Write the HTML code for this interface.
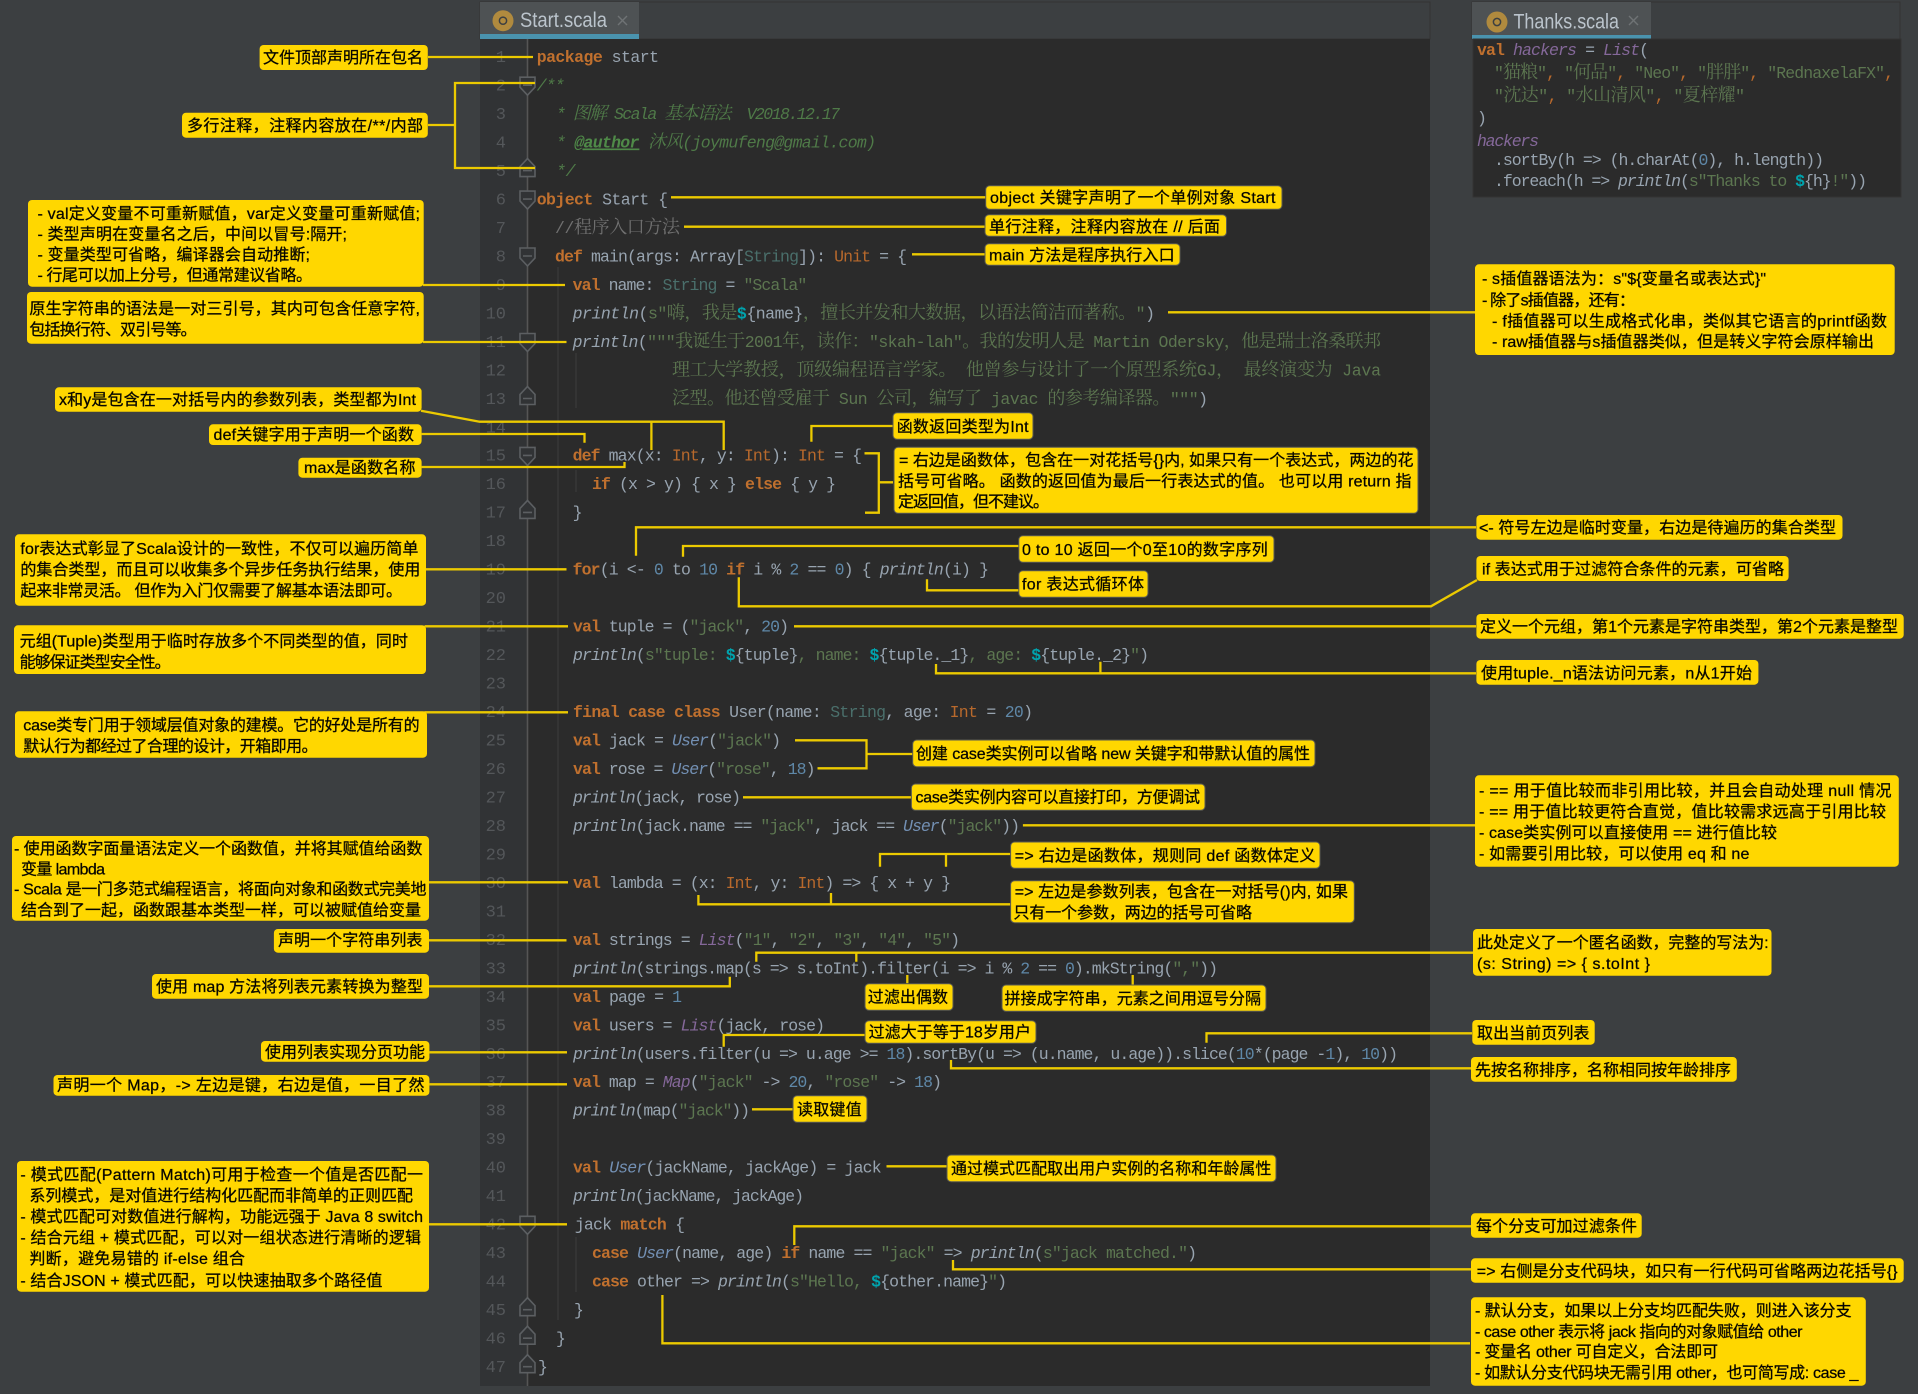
<!DOCTYPE html>
<html lang="zh-CN"><head><meta charset="utf-8"><title>Scala</title>
<style>
html,body{margin:0;padding:0;background:#3c3f41;width:1918px;height:1394px;overflow:hidden}
svg{display:block;position:absolute;left:0;top:0}
text{white-space:pre}
.c{font-family:"Liberation Mono","Noto Serif CJK SC",monospace;font-size:16.5px;fill:#98a4b0}
.z{font-family:"Noto Serif CJK SC","Liberation Mono",serif;font-size:18px}
.k{fill:#c0702e;font-weight:bold}.o{fill:#b8692c}.s{fill:#5c7650}.n{fill:#5f88a8}.m{font-style:italic;fill:#98a4b0}
.u{font-style:italic;fill:#7390b4}.l{font-style:italic;fill:#85689a}.y{fill:#4a6f6b}.d{fill:#00a3ad;font-weight:bold}
.g{fill:#707070}.dc{fill:#4f7a48;font-style:italic}.w{font-style:italic;fill:#4f8a48;font-weight:bold;text-decoration:underline}
.ln{font-family:"Liberation Mono",monospace;font-size:17px;fill:#54575a;text-anchor:end}
.t{font-family:"Liberation Sans","Noto Sans CJK SC",sans-serif;font-size:16px;fill:#000;stroke:#2a2400;stroke-width:.35px}
.b{fill:#ffd700}.bb{fill:#ffd700;stroke:#5a5a50;stroke-width:1}
.tab{font-family:"Liberation Sans",sans-serif;font-size:21px;fill:#bbc4cc}
.x{stroke:#6f7375;stroke-width:1.4;fill:none}
.le{fill:none;stroke:#ecca00;stroke-width:2.3}
.fo{fill:#313335;stroke:#5c5f62;stroke-width:1.6}
</style></head><body>
<svg xmlns="http://www.w3.org/2000/svg" width="1918" height="1394" viewBox="0 0 1918 1394" xml:space="preserve">
<rect width="1918" height="1394" fill="#3c3f41"/>
<!-- main panel -->
<rect x="480" y="2" width="950" height="37" fill="#3c3f41" stroke="#333" stroke-width="1"/>
<rect x="480" y="2" width="159" height="32" fill="#4e5254"/>
<rect x="480" y="34" width="159" height="5" fill="#4a93ae"/>
<rect x="480" y="39" width="47" height="1347" fill="#313335"/>
<rect x="527" y="39" width="903" height="1347" fill="#2b2b2b"/>
<circle cx="503" cy="20.7" r="10.5" fill="#b08a3e"/><circle cx="503" cy="20.7" r="3.6" fill="none" stroke="#3c3f41" stroke-width="1.5"/>
<text class="tab" x="520" y="27" textLength="87" lengthAdjust="spacingAndGlyphs">Start.scala</text>
<path class="x" d="M618 16L627 25M627 16L618 25"/>
<!-- thanks panel -->
<rect x="1472" y="2" width="428" height="37" fill="#3c3f41" stroke="#333" stroke-width="1"/>
<rect x="1472" y="2" width="179" height="33" fill="#4e5254"/>
<rect x="1472" y="35" width="179" height="4" fill="#4a93ae"/>
<rect x="1473" y="39" width="428" height="158" fill="#2b2b2b" stroke="#333" stroke-width="1"/>
<circle cx="1497" cy="22" r="10.5" fill="#b08a3e"/><circle cx="1497" cy="22" r="3.6" fill="none" stroke="#3c3f41" stroke-width="1.5"/>
<text class="tab" x="1513.5" y="28.3" textLength="105.5" lengthAdjust="spacingAndGlyphs">Thanks.scala</text>
<path class="x" d="M1629 16L1638 25M1638 16L1629 25"/>
<!-- guides -->
<path fill="none" stroke="#3d3d3d" stroke-width="1" d="M558 267V1320M576 353V408M576 470V492M576 1237V1292"/>
<path fill="none" stroke="#555" stroke-width="1.6" d="M527.5 39V1386"/>
<!-- fold icons -->
<g>
<path class="fo" transform="translate(527.5,85.2)" d="M-7.5,-8H7.5V2L0,10L-7.5,2Z"/>
<path class="fo" transform="translate(527.5,199.1)" d="M-7.5,-8H7.5V2L0,10L-7.5,2Z"/>
<path class="fo" transform="translate(527.5,256)" d="M-7.5,-8H7.5V2L0,10L-7.5,2Z"/>
<path class="fo" transform="translate(527.5,341.5)" d="M-7.5,-8H7.5V2L0,10L-7.5,2Z"/>
<path class="fo" transform="translate(527.5,455.4)" d="M-7.5,-8H7.5V2L0,10L-7.5,2Z"/>
<path class="fo" transform="translate(527.5,1224.3)" d="M-7.5,-8H7.5V2L0,10L-7.5,2Z"/>
<path class="fo" transform="translate(527.5,170.6)" d="M-7.5,6V-4L0,-12L7.5,-4V6Z"/>
<path class="fo" transform="translate(527.5,398.5)" d="M-7.5,6V-4L0,-12L7.5,-4V6Z"/>
<path class="fo" transform="translate(527.5,512.4)" d="M-7.5,6V-4L0,-12L7.5,-4V6Z"/>
<path class="fo" transform="translate(527.5,1309.7)" d="M-7.5,6V-4L0,-12L7.5,-4V6Z"/>
<path class="fo" transform="translate(527.5,1338.2)" d="M-7.5,6V-4L0,-12L7.5,-4V6Z"/>
<path class="fo" transform="translate(527.5,1366.7)" d="M-7.5,6V-4L0,-12L7.5,-4V6Z"/>
<path stroke="#5c5f62" stroke-width="1.6" d="M523 85.2h9M523 199.1h9M523 256h9M523 341.5h9M523 455.4h9M523 1224.3h9M523 170.6h9M523 398.5h9M523 512.4h9M523 1309.7h9M523 1338.2h9M523 1366.7h9"/>
</g>
<!-- line numbers -->
<g class="ln">
<text class="ln" x="506" y="62">1</text><text class="ln" x="506" y="90.5">2</text><text class="ln" x="506" y="119">3</text><text class="ln" x="506" y="147.5">4</text><text class="ln" x="506" y="176">5</text><text class="ln" x="506" y="204.5">6</text><text class="ln" x="506" y="233">7</text><text class="ln" x="506" y="261.5">8</text><text class="ln" x="506" y="289.8">9</text><text class="ln" x="506" y="318.3">10</text><text class="ln" x="506" y="346.8">11</text><text class="ln" x="506" y="375.3">12</text><text class="ln" x="506" y="403.8">13</text><text class="ln" x="506" y="432.3">14</text><text class="ln" x="506" y="460.7">15</text><text class="ln" x="506" y="489.2">16</text><text class="ln" x="506" y="517.7">17</text><text class="ln" x="506" y="546.2">18</text><text class="ln" x="506" y="574.6">19</text><text class="ln" x="506" y="603.1">20</text><text class="ln" x="506" y="631.6">21</text><text class="ln" x="506" y="660.1">22</text><text class="ln" x="506" y="688.6">23</text><text class="ln" x="506" y="717">24</text><text class="ln" x="506" y="745.5">25</text><text class="ln" x="506" y="774">26</text><text class="ln" x="506" y="802.5">27</text><text class="ln" x="506" y="830.9">28</text><text class="ln" x="506" y="859.4">29</text><text class="ln" x="506" y="887.9">30</text><text class="ln" x="506" y="916.4">31</text><text class="ln" x="506" y="944.8">32</text><text class="ln" x="506" y="973.3">33</text><text class="ln" x="506" y="1001.8">34</text><text class="ln" x="506" y="1030.3">35</text><text class="ln" x="506" y="1058.8">36</text><text class="ln" x="506" y="1087.2">37</text><text class="ln" x="506" y="1115.7">38</text><text class="ln" x="506" y="1144.2">39</text><text class="ln" x="506" y="1172.7">40</text><text class="ln" x="506" y="1201.1">41</text><text class="ln" x="506" y="1229.6">42</text><text class="ln" x="506" y="1258.1">43</text><text class="ln" x="506" y="1286.6">44</text><text class="ln" x="506" y="1315.1">45</text><text class="ln" x="506" y="1343.5">46</text><text class="ln" x="506" y="1372">47</text>
</g>
<!-- code -->
<text class="c" x="536.7" y="62" textLength="122.3"><tspan class="k">package</tspan> start</text>
<text class="c dc" x="536.7" y="90.5" textLength="28"><tspan class="dc">/**</tspan></text>
<text class="c" x="556" y="119" textLength="284"><tspan class="dc">* </tspan><tspan class="dc z">图解</tspan><tspan class="dc"> Scala </tspan><tspan class="dc z">基本语法</tspan><tspan class="dc">  V2018.12.17</tspan></text>
<text class="c" x="556" y="147.5" textLength="320"><tspan class="dc">* </tspan><tspan class="w">@author</tspan><tspan class="dc"> </tspan><tspan class="dc z">沐风</tspan><tspan class="dc">(joymufeng@gmail.com)</tspan></text>
<text class="c" x="556" y="176" textLength="19.5"><tspan class="dc">*/</tspan></text>
<text class="c" x="536.7" y="204.5" textLength="131.3"><tspan class="k">object</tspan> Start {</text>
<text class="c" x="555" y="233" textLength="125"><tspan class="g">//</tspan><tspan class="g z">程序入口方法</tspan></text>
<text class="c" x="555" y="261.5" textLength="352"><tspan class="k">def</tspan> main(args: Array[<tspan class="y">String</tspan>]): <tspan class="o">Unit</tspan> = {</text>
<text class="c" x="572.6" y="289.8" textLength="234.7"><tspan class="k">val</tspan> name: <tspan class="y">String</tspan> = <tspan class="s">"Scala"</tspan></text>
<text class="c" x="572.6" y="318.3" textLength="582.4"><tspan class="m">println</tspan>(<tspan class="s">s"</tspan><tspan class="s z">嗨，我是</tspan><tspan class="d">$</tspan>{name}<tspan class="s z">，擅长并发和大数据，以语法简洁而著称。</tspan><tspan class="s">"</tspan>)</text>
<text class="c" x="572.6" y="346.8" textLength="808.4"><tspan class="m">println</tspan>(<tspan class="s">"""</tspan><tspan class="s z">我诞生于</tspan><tspan class="s">2001</tspan><tspan class="s z">年，读作：</tspan><tspan class="s">"skah-lah"</tspan><tspan class="s z">。我的发明人是</tspan><tspan class="s"> Martin Odersky</tspan><tspan class="s z">，他是瑞士洛桑联邦</tspan></text>
<text class="c" x="672" y="375.3" textLength="709"><tspan class="s z">理工大学教授，顶级编程语言学家。</tspan><tspan class="s"> </tspan><tspan class="s z">他曾参与设计了一个原型系统</tspan><tspan class="s">GJ</tspan><tspan class="s z">，</tspan><tspan class="s"> </tspan><tspan class="s z">最终演变为</tspan><tspan class="s"> Java</tspan></text>
<text class="c" x="672" y="403.8" textLength="536"><tspan class="s z">泛型。他还曾受雇于</tspan><tspan class="s"> Sun </tspan><tspan class="s z">公司，编写了</tspan><tspan class="s"> javac </tspan><tspan class="s z">的参考编译器。</tspan><tspan class="s">"""</tspan>)</text>
<text class="c" x="572.6" y="460.7" textLength="289.4"><tspan class="k">def</tspan> max(x: <tspan class="o">Int</tspan>, y: <tspan class="o">Int</tspan>): <tspan class="o">Int</tspan> = {</text>
<text class="c" x="592" y="489.2" textLength="244"><tspan class="k">if</tspan> (x &gt; y) { x } <tspan class="k">else</tspan> { y }</text>
<text class="c" x="572.6" y="517.7" textLength="5">}</text>
<text class="c" x="572.6" y="574.6" textLength="416.4"><tspan class="k">for</tspan>(i &lt;- <tspan class="n">0</tspan> to <tspan class="n">10</tspan> <tspan class="k">if</tspan> i % <tspan class="n">2</tspan> == <tspan class="n">0</tspan>) { <tspan class="m">println</tspan>(i) }</text>
<text class="c" x="573" y="631.6" textLength="216"><tspan class="k">val</tspan> tuple = (<tspan class="s">"jack"</tspan>, <tspan class="n">20</tspan>)</text>
<text class="c" x="573" y="660.1" textLength="576"><tspan class="m">println</tspan>(<tspan class="s">s"tuple: </tspan><tspan class="d">$</tspan>{tuple}<tspan class="s">, name: </tspan><tspan class="d">$</tspan>{tuple._1}<tspan class="s">, age: </tspan><tspan class="d">$</tspan>{tuple._2}<tspan class="s">"</tspan>)</text>
<text class="c" x="573" y="717" textLength="460"><tspan class="k">final case class</tspan> User(name: <tspan class="y">String</tspan>, age: <tspan class="o">Int</tspan> = <tspan class="n">20</tspan>)</text>
<text class="c" x="573" y="745.5" textLength="208"><tspan class="k">val</tspan> jack = <tspan class="u">User</tspan>(<tspan class="s">"jack"</tspan>)</text>
<text class="c" x="573" y="774" textLength="242.5"><tspan class="k">val</tspan> rose = <tspan class="u">User</tspan>(<tspan class="s">"rose"</tspan>, <tspan class="n">18</tspan>)</text>
<text class="c" x="573" y="802.5" textLength="168"><tspan class="m">println</tspan>(jack, rose)</text>
<text class="c" x="573" y="830.9" textLength="447"><tspan class="m">println</tspan>(jack.name == <tspan class="s">"jack"</tspan>, jack == <tspan class="u">User</tspan>(<tspan class="s">"jack"</tspan>))</text>
<text class="c" x="573" y="887.9" textLength="378"><tspan class="k">val</tspan> lambda = (x: <tspan class="o">Int</tspan>, y: <tspan class="o">Int</tspan>) =&gt; { x + y }</text>
<text class="c" x="573" y="944.8" textLength="387"><tspan class="k">val</tspan> strings = <tspan class="l">List</tspan>(<tspan class="s">"1"</tspan>, <tspan class="s">"2"</tspan>, <tspan class="s">"3"</tspan>, <tspan class="s">"4"</tspan>, <tspan class="s">"5"</tspan>)</text>
<text class="c" x="573" y="973.3" textLength="645"><tspan class="m">println</tspan>(strings.map(s =&gt; s.toInt).filter(i =&gt; i % <tspan class="n">2</tspan> == <tspan class="n">0</tspan>).mkString(<tspan class="s">","</tspan>))</text>
<text class="c" x="573" y="1001.8" textLength="109"><tspan class="k">val</tspan> page = <tspan class="n">1</tspan></text>
<text class="c" x="573" y="1030.3" textLength="252"><tspan class="k">val</tspan> users = <tspan class="l">List</tspan>(jack, rose)</text>
<text class="c" x="573" y="1058.8" textLength="825"><tspan class="m">println</tspan>(users.filter(u =&gt; u.age &gt;= <tspan class="n">18</tspan>).sortBy(u =&gt; (u.name, u.age)).slice(<tspan class="n">10</tspan>*(page -<tspan class="n">1</tspan>), <tspan class="n">10</tspan>))</text>
<text class="c" x="573" y="1087.2" textLength="369"><tspan class="k">val</tspan> map = <tspan class="l">Map</tspan>(<tspan class="s">"jack"</tspan> -&gt; <tspan class="n">20</tspan>, <tspan class="s">"rose"</tspan> -&gt; <tspan class="n">18</tspan>)</text>
<text class="c" x="573" y="1115.7" textLength="177"><tspan class="m">println</tspan>(map(<tspan class="s">"jack"</tspan>))</text>
<text class="c" x="573" y="1172.7" textLength="308.6"><tspan class="k">val</tspan> <tspan class="u">User</tspan>(jackName, jackAge) = jack</text>
<text class="c" x="573" y="1201.1" textLength="231"><tspan class="m">println</tspan>(jackName, jackAge)</text>
<text class="c" x="574.7" y="1229.6" textLength="110.3">jack <tspan class="k">match</tspan> {</text>
<text class="c" x="592" y="1258.1" textLength="605"><tspan class="k">case</tspan> <tspan class="u">User</tspan>(name, age) <tspan class="k">if</tspan> name == <tspan class="s">"jack"</tspan> =&gt; <tspan class="m">println</tspan>(<tspan class="s">s"jack matched."</tspan>)</text>
<text class="c" x="592" y="1286.6" textLength="415"><tspan class="k">case</tspan> other =&gt; <tspan class="m">println</tspan>(<tspan class="s">s"Hello, </tspan><tspan class="d">$</tspan>{other.name}<tspan class="s">"</tspan>)</text>
<text class="c" x="574" y="1315.1" textLength="5">}</text>
<text class="c" x="556" y="1343.5" textLength="5">}</text>
<text class="c" x="538" y="1372" textLength="5">}</text>
<!-- thanks code -->
<text class="c" x="1477" y="55" textLength="172"><tspan class="k">val</tspan> <tspan class="l">hackers</tspan> = <tspan class="l">List</tspan>(</text>
<text class="c" x="1494" y="78" textLength="400"><tspan class="s">"</tspan><tspan class="s z">猫粮</tspan><tspan class="s">"</tspan><tspan class="o">,</tspan> <tspan class="s">"</tspan><tspan class="s z">何品</tspan><tspan class="s">"</tspan><tspan class="o">,</tspan> <tspan class="s">"Neo"</tspan><tspan class="o">,</tspan> <tspan class="s">"</tspan><tspan class="s z">胖胖</tspan><tspan class="s">"</tspan><tspan class="o">,</tspan> <tspan class="s">"RednaxelaFX"</tspan><tspan class="o">,</tspan></text>
<text class="c" x="1494" y="101" textLength="251"><tspan class="s">"</tspan><tspan class="s z">沈达</tspan><tspan class="s">"</tspan><tspan class="o">,</tspan> <tspan class="s">"</tspan><tspan class="s z">水山清风</tspan><tspan class="s">"</tspan><tspan class="o">,</tspan> <tspan class="s">"</tspan><tspan class="s z">夏梓耀</tspan><tspan class="s">"</tspan></text>
<text class="c" x="1477" y="123" textLength="6">)</text>
<text class="c" x="1477" y="146" textLength="62"><tspan class="l">hackers</tspan></text>
<text class="c" x="1494" y="165" textLength="330">.sortBy(h =&gt; (h.charAt(<tspan class="n">0</tspan>), h.length))</text>
<text class="c" x="1494" y="186" textLength="373">.foreach(h =&gt; <tspan class="m">println</tspan>(<tspan class="s">s"Thanks to </tspan><tspan class="d">$</tspan>{h}<tspan class="s">!"</tspan>))</text>
<!-- leaders -->
<path class="le" d="M428 57H533
M428 125H455M535 83H455V168H535
M423 285H565M423 342H566.5
M421 410.7L479.6 421.7H723.7V450M651.4 421.7V450
M421.6 434H584.5V442.7
M421.6 467H624.5V462
M893 426H811.4V441.7
M864.5 453.3H878.8V512.7H865M878.8 482.3H893
M636 555.7V527.3H1476
M683 556.7V546H1018.8
M927 579.3V590.3H1018.8
M738.8 577.3V606.3H1431L1477 580
M425.7 569.3H566.5
M424.5 626.3H568M794 626.3H1476
M936 664V673.3H1476M1100.4 661.7V673.3
M424.5 712.3H568
M795 740.3H866.5V768.3H817.5M866.5 754H912.7
M743 797.3H911.4
M1022.9 825.3H1475
M880 866.7V854H1010.6M946 854V866.7
M698.4 895V904.3H1010.6M831 893V904.3
M428.6 882.3H568
M428.6 940.3H566.5
M428.6 986.3H729.8V976.7
M756.3 961.7V952.7H1473M856.3 952.7V961.7
M907.3 975V983.3M1132.7 975V985
M723.7 1046.7V1035H864.5
M1206.5 1042.7V1033.3H1472
M951 1060V1068.3H1472
M429.4 1052.3H567M429.4 1084.3H567
M752 1109.3H793
M886.5 1166.3H947
M429 1224.3H567
M794.3 1245V1226.3H1471
M953 1260V1269.3H1471
M662.4 1295V1343.3H1470
M671 197.3H986M684 226.7H985M912 254.3H985
M1168 312.3H1475"/>
<!-- callouts: boxes -->
<g>
<rect class="b" x="259.6" y="45" width="168.2" height="25" rx="4"/>
<rect class="b" x="182" y="112.7" width="245.8" height="25" rx="4"/>
<rect class="b" x="28" y="200" width="395.7" height="86.7" rx="4"/>
<rect class="b" x="27" y="292" width="396.7" height="51.7" rx="4"/>
<rect class="b" x="55" y="387.3" width="366.6" height="24.4" rx="4"/>
<rect class="b" x="209" y="424.3" width="212.6" height="20.7" rx="4"/>
<rect class="b" x="298.4" y="457.7" width="123.2" height="20" rx="4"/>
<rect class="b" x="15" y="534.3" width="411" height="71.4" rx="4"/>
<rect class="b" x="14" y="625.3" width="412" height="48.7" rx="4"/>
<rect class="b" x="15" y="711.3" width="412" height="46.4" rx="4"/>
<rect class="b" x="12" y="836" width="417" height="84.7" rx="4"/>
<rect class="b" x="273.9" y="929" width="155.1" height="23.7" rx="4"/>
<rect class="b" x="152" y="974" width="277" height="24.7" rx="4"/>
<rect class="b" x="261" y="1041" width="168.4" height="20.7" rx="4"/>
<rect class="b" x="53.5" y="1075" width="375.9" height="20.7" rx="4"/>
<rect class="b" x="17" y="1161" width="412" height="130.7" rx="4"/>
<rect class="bb" x="985.7" y="185.7" width="296.3" height="23.6" rx="4"/>
<rect class="bb" x="985" y="214.7" width="241.5" height="21.6" rx="4"/>
<rect class="bb" x="985" y="243.7" width="195" height="21.6" rx="4"/>
<rect class="bb" x="893" y="412.7" width="140" height="26.6" rx="4"/>
<rect class="bb" x="894" y="447.3" width="524" height="66" rx="4"/>
<rect class="b" x="1475" y="264.3" width="419.7" height="90.7" rx="4"/>
<rect class="b" x="1476.4" y="515" width="366.1" height="24.7" rx="4"/>
<rect class="b" x="1476.4" y="556" width="312.2" height="25" rx="4"/>
<rect class="b" x="1476.4" y="614" width="427.3" height="24.7" rx="4"/>
<rect class="b" x="1476.4" y="660" width="282" height="24.7" rx="4"/>
<rect class="b" x="1475" y="775.3" width="423.8" height="91.4" rx="4"/>
<rect class="bb" x="1018.8" y="535.7" width="255.2" height="26.6" rx="4"/>
<rect class="bb" x="1018.8" y="570.7" width="129.2" height="26.6" rx="4"/>
<rect class="bb" x="912.7" y="740" width="402.3" height="26.7" rx="4"/>
<rect class="bb" x="911.4" y="784" width="293.6" height="26.3" rx="4"/>
<rect class="bb" x="1010.6" y="842" width="309.4" height="26.3" rx="4"/>
<rect class="bb" x="1010.6" y="880.7" width="343.7" height="42" rx="4"/>
<rect class="bb" x="865" y="983.7" width="88" height="26.6" rx="4"/>
<rect class="bb" x="1002" y="985" width="264" height="26.3" rx="4"/>
<rect class="bb" x="865" y="1020.7" width="171" height="22.6" rx="4"/>
<rect class="bb" x="793" y="1095.7" width="74" height="26.6" rx="4"/>
<rect class="bb" x="947" y="1155" width="329" height="26.7" rx="4"/>
<rect class="b" x="1473" y="929" width="298.5" height="46.7" rx="4"/>
<rect class="b" x="1472.3" y="1020" width="122.4" height="24.7" rx="4"/>
<rect class="b" x="1471" y="1057" width="265.8" height="24.7" rx="4"/>
<rect class="b" x="1471" y="1213.3" width="170.7" height="24.4" rx="4"/>
<rect class="b" x="1471" y="1258.3" width="432.7" height="24.4" rx="4"/>
<rect class="b" x="1471" y="1297.3" width="394.8" height="88.4" rx="4"/>
</g>
<!-- callouts: text -->
<g>
<text class="t" x="263" y="63" textLength="160">文件顶部声明所在包名</text>
<text class="t" x="187" y="131" textLength="236">多行注释，注释内容放在/**/内部</text>
<text class="t" x="37.5" y="219" textLength="382.5">- val定义变量不可重新赋值，var定义变量可重新赋值;</text>
<text class="t" x="37.5" y="239.5" textLength="309.5">- 类型声明在变量名之后，中间以冒号:隔开;</text>
<text class="t" x="37.5" y="260" textLength="272.5">- 变量类型可省略，编译器会自动推断;</text>
<text class="t" x="37.5" y="280.5" textLength="274.5">- 行尾可以加上分号，但通常建议省略。</text>
<text class="t" x="29.4" y="314" textLength="390.6">原生字符串的语法是一对三引号，其内可包含任意字符,</text>
<text class="t" x="29.4" y="335" textLength="167.3">包括换行符、双引号等。</text>
<text class="t" x="59" y="405" textLength="357">x和y是包含在一对括号内的参数列表，类型都为Int</text>
<text class="t" x="213.5" y="440" textLength="200.5">def关键字用于声明一个函数</text>
<text class="t" x="304" y="473" textLength="111.5">max是函数名称</text>
<text class="t" x="20.4" y="554" textLength="398">for表达式彰显了Scala设计的一致性，不仅可以遍历简单</text>
<text class="t" x="20.4" y="575" textLength="400">的集合类型，而且可以收集多个异步任务执行结果，使用</text>
<text class="t" x="20.4" y="596" textLength="381.6">起来非常灵活。 但作为入门仅需要了解基本语法即可。</text>
<text class="t" x="19.6" y="646.5" textLength="388.4">元组(Tuple)类型用于临时存放多个不同类型的值，同时</text>
<text class="t" x="19.6" y="667.5" textLength="151">能够保证类型安全性。</text>
<text class="t" x="23.3" y="730.5" textLength="396.3">case类专门用于领域层值对象的建模。它的好处是所有的</text>
<text class="t" x="23.3" y="751.5" textLength="294.3">默认行为都经过了合理的设计，开箱即用。</text>
<text class="t" x="14" y="854" textLength="408.4">- 使用函数字面量语法定义一个函数值，并将其赋值给函数</text>
<text class="t" x="21" y="874.5" textLength="84">变量 lambda</text>
<text class="t" x="14" y="894.5" textLength="412.5">- Scala 是一门多范式编程语言，将面向对象和函数式完美地</text>
<text class="t" x="21" y="915.5" textLength="400">结合到了一起，函数跟基本类型一样，可以被赋值给变量</text>
<text class="t" x="278" y="945.5" textLength="144.4">声明一个字符串列表</text>
<text class="t" x="156" y="992" textLength="267">使用 map 方法将列表元素转换为整型</text>
<text class="t" x="265" y="1057.5" textLength="160">使用列表实现分页功能</text>
<text class="t" x="57" y="1090.5" textLength="367.5">声明一个 Map，-&gt; 左边是键，右边是值，一目了然</text>
<text class="t" x="20.4" y="1180" textLength="402.6">- 模式匹配(Pattern Match)可用于检查一个值是否匹配一</text>
<text class="t" x="29.4" y="1201" textLength="383.6">系列模式，是对值进行结构化匹配而非简单的正则匹配</text>
<text class="t" x="20.4" y="1222" textLength="402.6">- 模式匹配可对数值进行解构，功能远强于 Java 8 switch</text>
<text class="t" x="20.4" y="1243" textLength="400.6">- 结合元组 + 模式匹配，可以对一组状态进行清晰的逻辑</text>
<text class="t" x="29.4" y="1264" textLength="215.6">判断，避免易错的 if-else 组合</text>
<text class="t" x="20.4" y="1286" textLength="362">- 结合JSON + 模式匹配，可以快速抽取多个路径值</text>
<text class="t" x="990" y="203" textLength="285.5">object 关键字声明了一个单例对象 Start</text>
<text class="t" x="989" y="232" textLength="231">单行注释，注释内容放在 // 后面</text>
<text class="t" x="989" y="260.5" textLength="185.7">main 方法是程序执行入口</text>
<text class="t" x="896.7" y="432" textLength="131.9">函数返回类型为Int</text>
<text class="t" x="899" y="465.5" textLength="514.5">= 右边是函数体，包含在一对花括号{}内, 如果只有一个表达式，两边的花</text>
<text class="t" x="898" y="486.5" textLength="513.5">括号可省略。 函数的返回值为最后一行表达式的值。 也可以用 return 指</text>
<text class="t" x="898" y="507" textLength="151">定返回值，但不建议。</text>
<text class="t" x="1482" y="284" textLength="284">- s插值器语法为：s"${变量名或表达式}"</text>
<text class="t" x="1482" y="305.5" textLength="153">- 除了s插值器，还有：</text>
<text class="t" x="1492" y="326.5" textLength="395">- f插值器可以生成格式化串，类似其它语言的printf函数</text>
<text class="t" x="1492" y="347" textLength="382">- raw插值器与s插值器类似，但是转义字符会原样输出</text>
<text class="t" x="1479" y="533" textLength="357">&lt;- 符号左边是临时变量，右边是待遍历的集合类型</text>
<text class="t" x="1482" y="574.5" textLength="302">if 表达式用于过滤符合条件的元素，可省略</text>
<text class="t" x="1480" y="632" textLength="418">定义一个元组，第1个元素是字符串类型，第2个元素是整型</text>
<text class="t" x="1481" y="678.5" textLength="271">使用tuple._n语法访问元素，n从1开始</text>
<text class="t" x="1479" y="796" textLength="412.5">- == 用于值比较而非引用比较，并且会自动处理 null 情况</text>
<text class="t" x="1479" y="817" textLength="407">- == 用于值比较更符合直觉，值比较需求远高于引用比较</text>
<text class="t" x="1479" y="838" textLength="298">- case类实例可以直接使用 == 进行值比较</text>
<text class="t" x="1479" y="859" textLength="270.4">- 如需要引用比较，可以使用 eq 和 ne</text>
<text class="t" x="1022" y="555" textLength="245.8">0 to 10 返回一个0至10的数字序列</text>
<text class="t" x="1022" y="589.5" textLength="122">for 表达式循环体</text>
<text class="t" x="916" y="759" textLength="394">创建 case类实例可以省略 new 关键字和带默认值的属性</text>
<text class="t" x="915.5" y="802.5" textLength="284.5">case类实例内容可以直接打印，方便调试</text>
<text class="t" x="1014.7" y="861" textLength="300.8">=&gt; 右边是函数体，规则同 def 函数体定义</text>
<text class="t" x="1014.7" y="897" textLength="333.3">=&gt; 左边是参数列表，包含在一对括号()内, 如果</text>
<text class="t" x="1013.5" y="918" textLength="238.5">只有一个参数，两边的括号可省略</text>
<text class="t" x="867.8" y="1002.5" textLength="80.2">过滤出偶数</text>
<text class="t" x="1004.5" y="1004" textLength="256.5">拼接成字符串，元素之间用逗号分隔</text>
<text class="t" x="868.6" y="1037.5" textLength="162.4">过滤大于等于18岁用户</text>
<text class="t" x="797" y="1115" textLength="64.6">读取键值</text>
<text class="t" x="951" y="1174" textLength="320.4">通过模式匹配取出用户实例的名称和年龄属性</text>
<text class="t" x="1477" y="948" textLength="291.6">此处定义了一个匿名函数，完整的写法为:</text>
<text class="t" x="1477" y="969" textLength="173">(s: String) =&gt; { s.toInt }</text>
<text class="t" x="1477" y="1038.5" textLength="112.4">取出当前页列表</text>
<text class="t" x="1475" y="1075.5" textLength="256">先按名称排序，名称相同按年龄排序</text>
<text class="t" x="1476" y="1231.5" textLength="161">每个分支可加过滤条件</text>
<text class="t" x="1476.8" y="1276.5" textLength="420.8">=&gt; 右侧是分支代码块，如只有一行代码可省略两边花括号{}</text>
<text class="t" x="1475" y="1316" textLength="376.5">- 默认分支，如果以上分支均匹配失败，则进入该分支</text>
<text class="t" x="1475" y="1337" textLength="327.5">- case other 表示将 jack 指向的对象赋值给 other</text>
<text class="t" x="1475" y="1357" textLength="243">- 变量名 other 可自定义，合法即可</text>
<text class="t" x="1475" y="1378" textLength="383.4">- 如默认分支代码块无需引用 other，也可简写成: case _</text>
</g>
</svg>
</body></html>
